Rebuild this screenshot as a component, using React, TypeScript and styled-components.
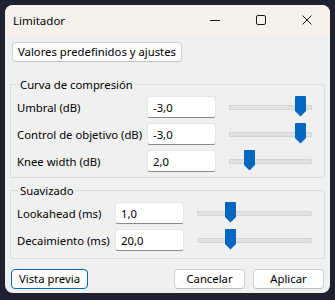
import { Fragment } from "react";
import styled, { createGlobalStyle } from "styled-components";

const GlobalStyle = createGlobalStyle`
  html, body {
    margin: 0;
    padding: 0;
    background: #1f2030;
    font-family: "Noto Sans", "Open Sans", sans-serif;
    font-size: 11.3px;
    color: #000;
  }
`;

const Window = styled.div`
  margin: 5px 0 0 5px;
  width: 325px;
  height: 288px;
  border-radius: 8px;
  overflow: hidden;
  background: #f0f0f0;
  display: flex;
  flex-direction: column;
`;

const TitleBar = styled.div`
  height: 30px;
  background: #f7f1ec;
  display: flex;
  align-items: center;
  padding-left: 8px;
`;

const Title = styled.span`
  flex: 1;
  font-size: 11.5px;
`;

const TitleButton = styled.div`
  width: 46px;
  height: 30px;
  display: flex;
  align-items: center;
  justify-content: center;
`;

const Body = styled.div`
  flex: 1;
  padding: 7px 5px 0 5px;
  display: flex;
  flex-direction: column;
`;

const Button = styled.button<{ $default?: boolean }>`
  font-family: inherit;
  font-size: 11.3px;
  color: #000;
  height: 20px;
  padding: 0 7px;
  background: #fdfdfd;
  border: 1px solid ${(p) => (p.$default ? "#0067c0" : "#d0d0d0")};
  border-bottom-color: ${(p) => (p.$default ? "#0067c0" : "#c0c0c0")};
  border-radius: 4px;
  line-height: 18px;
`;

const PresetButton = styled(Button)`
  align-self: flex-start;
  margin-left: 2px;
  width: 170px;
  padding: 0;
`;

const Group = styled.fieldset<{ $top: number; $bottom: number }>`
  margin: ${(p) => p.$top}px 0 0 0;
  padding: 4px 12px ${(p) => p.$bottom}px 6px;
  border: 1px solid #dcdcdc;
  border-radius: 2px;
  min-width: 0;
`;

const Legend = styled.legend`
  padding: 0 2px;
  margin-left: 1px;
  font-size: 11.3px;
`;

const Rows = styled.div<{ $label: number }>`
  display: grid;
  grid-template-columns: ${(p) => p.$label}px 69px 1fr;
  row-gap: 5px;
  align-items: center;
`;

const Label = styled.span`
  white-space: nowrap;
`;

const Field = styled.div`
  box-sizing: border-box;
  height: 22px;
  background: #fff;
  border: 1px solid #e6e6e6;
  border-bottom: 1px solid #8a8a8a;
  border-radius: 3px;
  padding-left: 5px;
  display: flex;
  align-items: center;
`;

const SliderWrap = styled.div`
  position: relative;
  height: 22px;
  margin-left: 13px;
`;

const Track = styled.div`
  position: absolute;
  left: 0;
  right: 0;
  top: 9px;
  height: 3px;
  background: #e1e1e1;
  border: 1px solid #d4d4d4;
  border-radius: 1px;
`;

const Thumb = styled.svg`
  position: absolute;
  top: 0;
  width: 11px;
  height: 21px;
`;

const Footer = styled.div`
  margin-top: 10px;
  display: flex;
  gap: 8px;
  padding: 0 1px;
`;

const FooterButton = styled(Button)<{ $w: number }>`
  width: ${(p) => p.$w}px;
  padding: 0;
`;

const Spacer = styled.div`
  flex: 1;
`;

interface Row {
  label: string;
  value: string;
  pos: number;
}

const curve: Row[] = [
  { label: "Umbral (dB)", value: "-3,0", pos: 0.85 },
  { label: "Control de objetivo (dB)", value: "-3,0", pos: 0.85 },
  { label: "Knee width (dB)", value: "2,0", pos: 0.24 },
];

const smooth: Row[] = [
  { label: "Lookahead (ms)", value: "1,0", pos: 0.29 },
  { label: "Decaimiento (ms)", value: "20,0", pos: 0.29 },
];

function Slider({ pos }: { pos: number }) {
  return (
    <SliderWrap>
      <Track />
      <Thumb viewBox="0 0 11 21" style={{ left: `calc(${pos * 100}% - 5px)` }}>
        <path d="M1 0 H10 Q11 0 11 1 V15 L5.5 20.5 L0 15 V1 Q0 0 1 0 Z" fill="#0067c0" />
      </Thumb>
    </SliderWrap>
  );
}

function Section({ rows, label }: { rows: Row[]; label: number }) {
  return (
    <Rows $label={label}>
      {rows.map((r) => (
        <Fragment key={r.label}>
          <Label>{r.label}</Label>
          <Field>{r.value}</Field>
          <Slider pos={r.pos} />
        </Fragment>
      ))}
    </Rows>
  );
}

export default function App() {
  return (
    <>
      <GlobalStyle />
      <Window>
        <TitleBar>
          <Title>Limitador</Title>
          <TitleButton>
            <svg width="10" height="10" viewBox="0 0 10 10">
              <path d="M0 5.5 H10" stroke="#1a1a1a" strokeWidth="1" />
            </svg>
          </TitleButton>
          <TitleButton>
            <svg width="10" height="10" viewBox="0 0 10 10">
              <rect x="0.5" y="0.5" width="9" height="9" rx="1.5" fill="none" stroke="#1a1a1a" strokeWidth="1" />
            </svg>
          </TitleButton>
          <TitleButton>
            <svg width="10" height="10" viewBox="0 0 10 10">
              <path d="M0.5 0.5 L9.5 9.5 M9.5 0.5 L0.5 9.5" stroke="#1a1a1a" strokeWidth="1" />
            </svg>
          </TitleButton>
        </TitleBar>
        <Body>
          <PresetButton>Valores predefinidos y ajustes</PresetButton>
          <Group $top={15} $bottom={5}>
            <Legend>Curva de compresión</Legend>
            <Section rows={curve} label={130} />
          </Group>
          <Group $top={5} $bottom={7}>
            <Legend>Suavizado</Legend>
            <Section rows={smooth} label={98} />
          </Group>
          <Footer>
            <FooterButton $default $w={77}>Vista previa</FooterButton>
            <Spacer />
            <FooterButton $w={71}>Cancelar</FooterButton>
            <FooterButton $w={71}>Aplicar</FooterButton>
          </Footer>
        </Body>
      </Window>
    </>
  );
}
